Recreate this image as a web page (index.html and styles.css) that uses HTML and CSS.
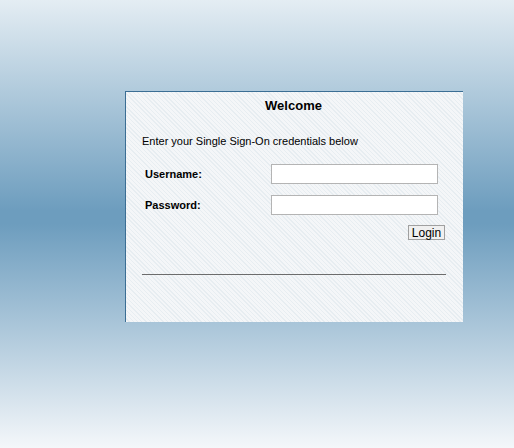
FILE: index.html
```html
<!DOCTYPE html>
<html lang="en">
<head>
    <meta charset="UTF-8">
    <title>Single Sign-On</title>
    <link rel="stylesheet" href="styles.css">
</head>
<body>
    <div class="login-box">
        <h1>Welcome</h1>
        <p class="intro">Enter your Single Sign-On credentials below</p>
        <form class="login-form">
            <div class="form-row">
                <label for="username">Username:</label>
                <input type="text" id="username">
            </div>
            <div class="form-row">
                <label for="password">Password:</label>
                <input type="password" id="password">
            </div>
            <div class="form-actions">
                <button type="submit">Login</button>
            </div>
        </form>
        <hr>
    </div>
</body>
</html>
```

FILE: styles.css
```css
* {
    margin: 0;
    padding: 0;
    box-sizing: border-box;
}

html, body {
    height: 100%;
}

body {
    font-family: 'Liberation Sans', Arial, sans-serif;
    font-size: 11px;
    color: #000;
    background: linear-gradient(to bottom, #e4edf3 0%, #6d9dbe 47%, #6d9dbe 50%, #f4f7fa 100%);
    padding: 91px 0 0 125px;
}

.login-box {
    width: 338px;
    height: 231px;
    border-top: 1px solid #3b6e94;
    border-left: 1px solid #3b6e94;
    background: repeating-linear-gradient(45deg, #f4f6f8 0, #f4f6f8 2px, #e7edf1 2px, #e7edf1 3px);
    padding: 0 18px 0 16px;
}

h1 {
    font-size: 13px;
    font-weight: bold;
    text-align: center;
    padding-top: 6px;
    height: 43px;
}

.intro {
    height: 29px;
}

.login-form {
    display: flex;
    flex-direction: column;
    gap: 11px;
}

.form-row {
    display: flex;
    align-items: center;
    padding-left: 3px;
}

.form-row label {
    font-weight: bold;
    width: 126px;
}

.form-row input {
    width: 167px;
    height: 20px;
    border: 1px solid #b4b4b4;
    background: #fff;
    font-family: inherit;
    font-size: 11px;
}

.form-actions {
    display: flex;
    justify-content: flex-end;
    margin-top: -1px;
}

.form-actions button {
    font-family: inherit;
    font-size: 12px;
    height: 15px;
    width: 37px;
    line-height: 12px;
    background: #f0f0f0;
    border: 1px solid #a0a0a0;
    color: #000;
}

hr {
    border: none;
    border-top: 1px solid #6c6c6c;
    margin-top: 34px;
    margin-right: -1px;
}
```
